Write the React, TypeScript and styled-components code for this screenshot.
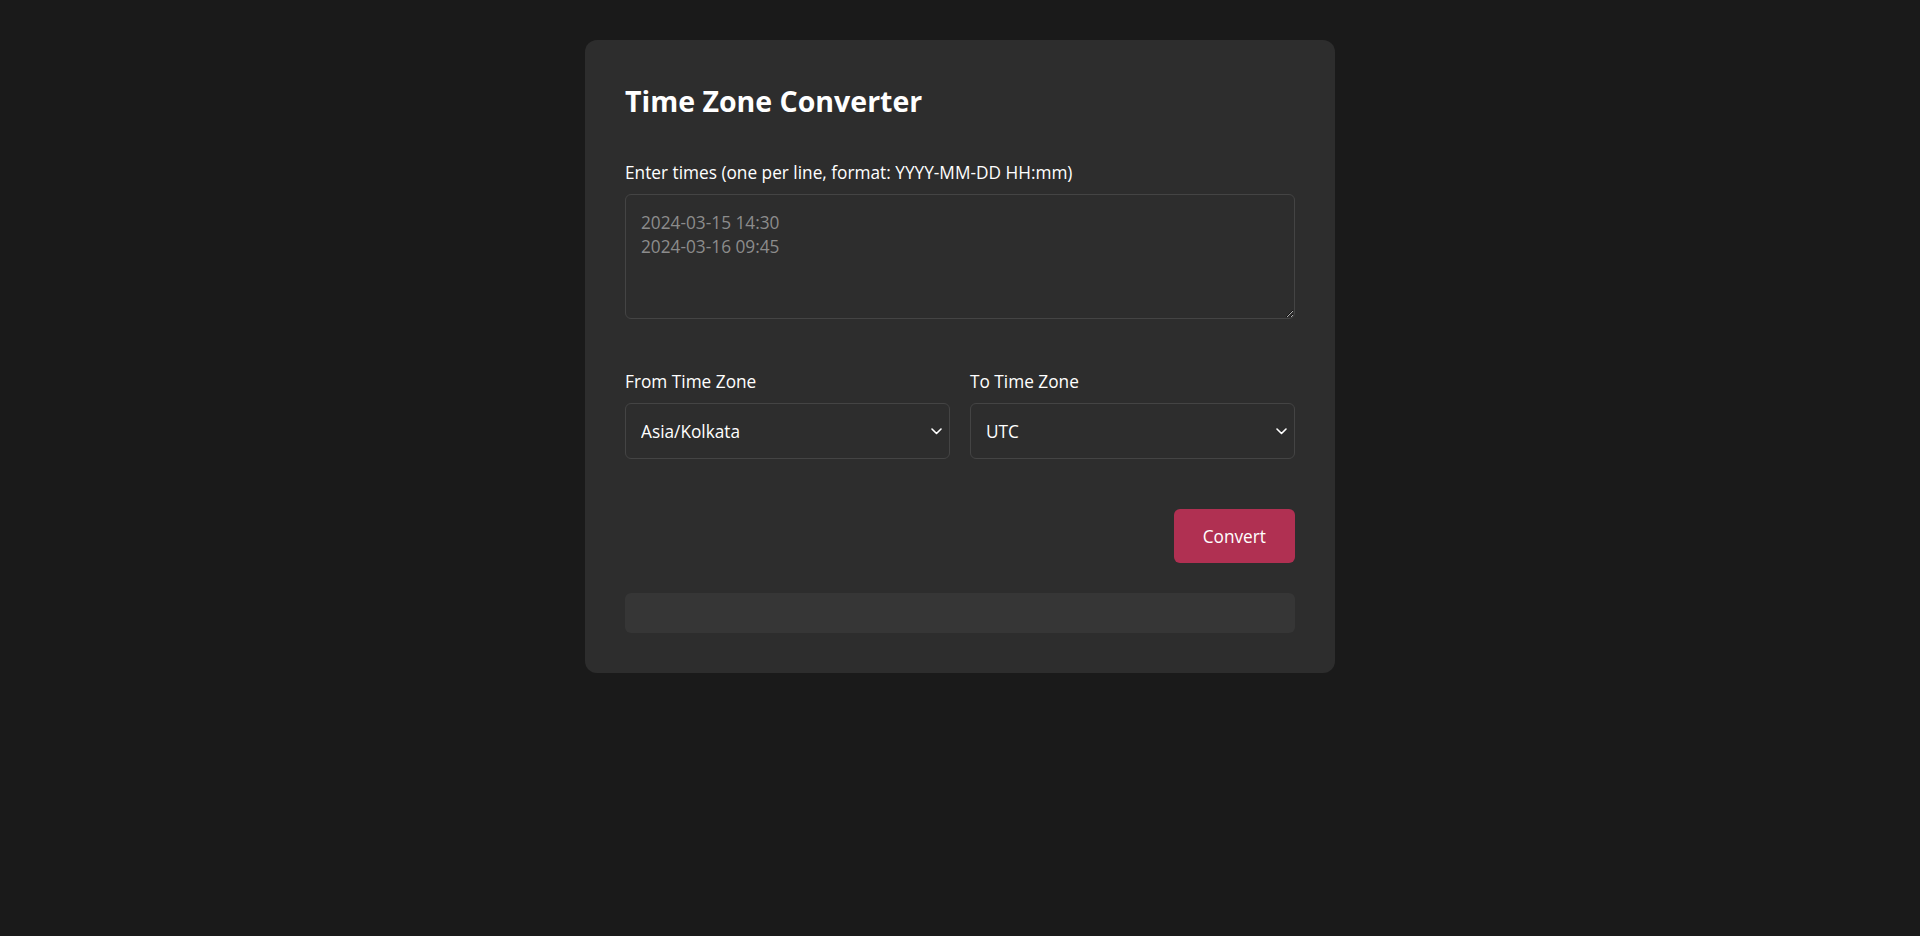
import React, { useState } from "react";
import styled, { createGlobalStyle } from "styled-components";

const GlobalStyle = createGlobalStyle`
  * { box-sizing: border-box; }
  html, body {
    margin: 0;
    padding: 0;
    background: #1a1a1a;
    color: #ffffff;
    font-family: "Open Sans", "Noto Sans", "Liberation Sans", sans-serif;
  }
`;

const Page = styled.div`
  min-height: 936px;
  padding: 40px 0;
`;

const Card = styled.main`
  width: 750px;
  margin: 0 auto;
  padding: 40px;
  background: #2d2d2d;
  border-radius: 12px;
  display: flex;
  flex-direction: column;
`;

const Title = styled.h2`
  margin: 0 0 38px;
  font-size: 28.5px;
  line-height: 42px;
  font-weight: 700;
  color: #ffffff;
`;

const Field = styled.div`
  display: flex;
  flex-direction: column;
`;

const Label = styled.label`
  display: block;
  margin-bottom: 9px;
  padding-top: 1px;
  font-size: 17.25px;
  line-height: 24px;
  color: #ffffff;
`;

const TextArea = styled.textarea`
  display: block;
  width: 100%;
  height: 125px;
  padding: 16px 15px 14px;
  border: 1px solid #444444;
  border-radius: 6px;
  background: #2d2d2d;
  color: #ffffff;
  font-family: inherit;
  font-size: 17.25px;
  line-height: 24px;
  resize: vertical;
  outline: none;

  &::placeholder {
    color: #8c8c8c;
  }
`;

const Row = styled.div`
  margin-top: 50px;
  display: grid;
  grid-template-columns: 1fr 1fr;
  gap: 20px;
`;

const SelectWrap = styled.div`
  position: relative;
`;

const Select = styled.select`
  display: block;
  width: 100%;
  height: 56px;
  padding: 16px 36px 14px 15px;
  border: 1px solid #444444;
  border-radius: 6px;
  background: #2d2d2d;
  color: #ffffff;
  font-family: inherit;
  font-size: 17.25px;
  line-height: 24px;
  appearance: none;
  -webkit-appearance: none;
  outline: none;
`;

const Chevron = styled.svg`
  position: absolute;
  right: 8px;
  top: 50%;
  width: 11px;
  height: 7px;
  margin-top: -3px;
  pointer-events: none;
`;

const Actions = styled.div`
  margin-top: 50px;
  display: flex;
  justify-content: flex-end;
`;

const Button = styled.button`
  padding: 16px 29px 14px;
  border: none;
  border-radius: 6px;
  background: #b03052;
  color: #ffffff;
  font-family: inherit;
  font-size: 17.25px;
  line-height: 24px;
  cursor: pointer;
`;

const Result = styled.div`
  margin-top: 30px;
  padding: 20px;
  background: #363636;
  border-radius: 6px;
  font-size: 17px;
`;

const zones = ["UTC", "Asia/Kolkata", "America/New_York", "Europe/London", "Asia/Tokyo"];

function ZoneSelect({ value, onChange }: { value: string; onChange: (v: string) => void }) {
  return (
    <SelectWrap>
      <Select value={value} onChange={(e) => onChange(e.target.value)}>
        {zones.map((z) => (
          <option key={z} value={z}>
            {z}
          </option>
        ))}
      </Select>
      <Chevron viewBox="0 0 11 7" fill="none">
        <path d="M1 1l4.5 4.5L10 1" stroke="#ffffff" strokeWidth="1.6" strokeLinecap="round" strokeLinejoin="round" />
      </Chevron>
    </SelectWrap>
  );
}

export default function App() {
  const [from, setFrom] = useState("Asia/Kolkata");
  const [to, setTo] = useState("UTC");
  return (
    <>
      <GlobalStyle />
      <Page>
        <Card>
          <Title>Time Zone Converter</Title>
          <Field>
            <Label htmlFor="times">Enter times (one per line, format: YYYY-MM-DD HH:mm)</Label>
            <TextArea id="times" placeholder={"2024-03-15 14:30\n2024-03-16 09:45"} />
          </Field>
          <Row>
            <Field>
              <Label>From Time Zone</Label>
              <ZoneSelect value={from} onChange={setFrom} />
            </Field>
            <Field>
              <Label>To Time Zone</Label>
              <ZoneSelect value={to} onChange={setTo} />
            </Field>
          </Row>
          <Actions>
            <Button type="button">Convert</Button>
          </Actions>
          <Result />
        </Card>
      </Page>
    </>
  );
}
